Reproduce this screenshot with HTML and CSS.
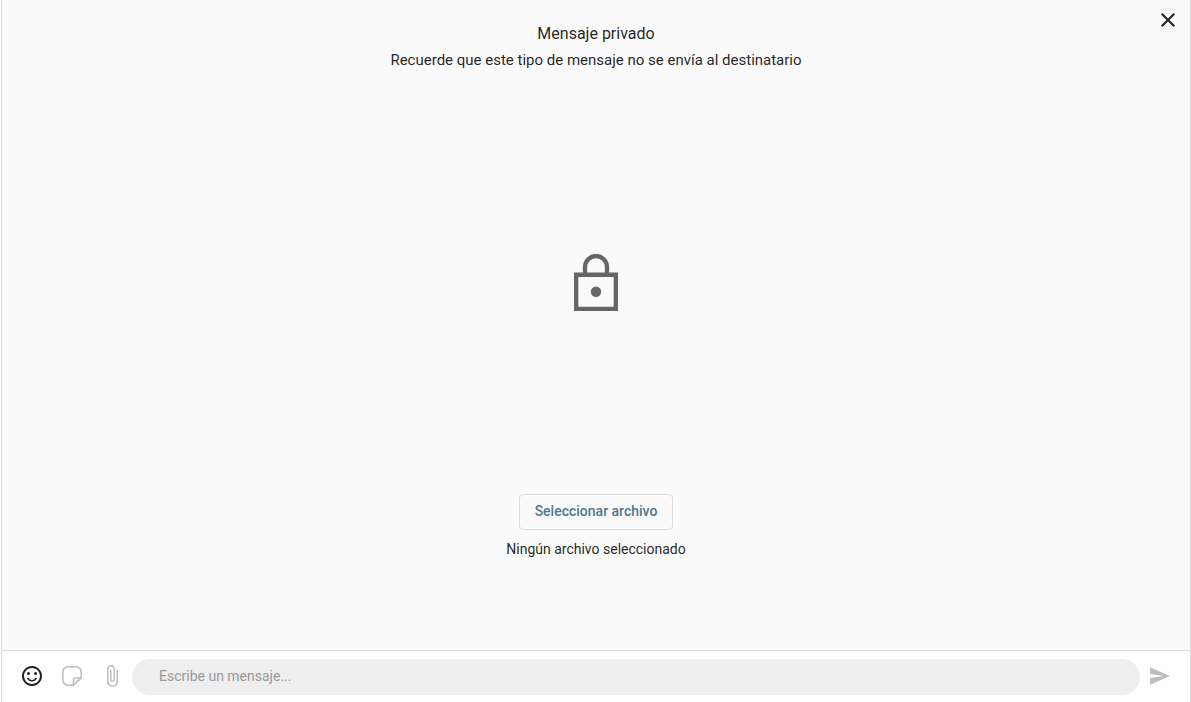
FILE: index.html
```html
<!DOCTYPE html>
<html lang="es">
<head>
  <meta charset="UTF-8" />
  <meta name="viewport" content="width=device-width, initial-scale=1" />
  <title>Mensaje privado</title>
  <link rel="stylesheet" href="styles.css">
</head>
<body>
  <div class="panel">
    <main class="note">
      <button class="icon-button close" type="button" aria-label="Cerrar">
        <svg width="24" height="24" viewBox="0 0 24 24">
          <path d="M19 6.41 17.59 5 12 10.59 6.41 5 5 6.41 10.59 12 5 17.59 6.41 19 12 13.41 17.59 19 19 17.59 13.41 12z"/>
        </svg>
      </button>

      <header class="intro">
        <h1>Mensaje privado</h1>
        <p>Recuerde que este tipo de mensaje no se envía al destinatario</p>
      </header>

      <svg class="lock" width="44" height="58" viewBox="0 0 44 58" aria-hidden="true">
        <path d="M11 20V13a11 11 0 0 1 22 0v7" fill="none" stroke="currentColor" stroke-width="4.300"/>
        <path d="M0 18.600h44V57H0zM4.300 23v29.700h35.400V23z" fill-rule="evenodd"/>
        <circle cx="22" cy="37.700" r="5.200"/>
      </svg>

      <div class="picker">
        <button class="picker-button" type="button">Seleccionar archivo</button>
        <p>Ningún archivo seleccionado</p>
      </div>
    </main>

    <form class="composer">
      <button class="icon-button emoji" type="button" aria-label="Emojis">
        <svg width="24" height="24" viewBox="0 0 24 24">
          <path d="M11.99 2C6.47 2 2 6.48 2 12s4.47 10 9.99 10C17.52 22 22 17.52 22 12S17.52 2 11.99 2zM12 20c-4.42 0-8-3.58-8-8s3.58-8 8-8 8 3.58 8 8-3.58 8-8 8z"/>
          <circle cx="8.5" cy="9.5" r="1.5"/>
          <circle cx="15.5" cy="9.5" r="1.5"/>
          <path d="M12 16c-1.480 0-2.750-.81-3.450-2H6.880c.8 2.050 2.790 3.500 5.120 3.500s4.320-1.450 5.120-3.500h-1.670c-.7 1.190-1.970 2-3.450 2z"/>
        </svg>
      </button>
      <button class="icon-button" type="button" aria-label="Stickers">
        <svg class="outline" width="24" height="24" viewBox="0 0 24 24">
          <path d="M13.5 21.2H8a5.200 5.200 0 0 1-5.200-5.200V8A5.200 5.200 0 0 1 8 2.800h8A5.200 5.200 0 0 1 21.200 8v6zM13.500 21.200V16a2 2 0 0 1 2-2h5.700"/>
        </svg>
      </button>
      <button class="icon-button" type="button" aria-label="Adjuntar archivo">
        <svg width="24" height="24" viewBox="0 0 24 24">
          <path d="M16.5 6v11.500c0 2.210-1.790 4-4 4s-4-1.790-4-4V5c0-1.380 1.120-2.500 2.500-2.500s2.500 1.120 2.500 2.500v10.500c0 .55-.45 1-1 1s-1-.45-1-1V6H10v9.500c0 1.380 1.120 2.500 2.500 2.500s2.500-1.120 2.500-2.500V5c0-2.210-1.790-4-4-4S7 2.790 7 5v12.500c0 3.040 2.460 5.500 5.500 5.500s5.500-2.460 5.500-5.500V6z"/>
        </svg>
      </button>
      <input class="message" type="text" placeholder="Escribe un mensaje..." aria-label="Escribe un mensaje">
      <button class="icon-button" type="submit" aria-label="Enviar">
        <svg width="24" height="24" viewBox="0 0 24 24">
          <path d="M2 20.700 22 12 2 3.300V10l14 2-14 2z"/>
        </svg>
      </button>
    </form>
  </div>
</body>
</html>
```
FILE: styles.css
```css
* {
  box-sizing: border-box;
}

body {
  margin: 0;
  padding-left: 1px;
  background: #fff;
  color: rgba(0, 0, 0, 0.87);
  font-family: Roboto, "Liberation Sans", sans-serif;
}

h1,
p {
  margin: 0;
  font-weight: 400;
}

button,
input {
  font-family: inherit;
}

svg {
  display: block;
  fill: currentColor;
}

.panel {
  display: flex;
  flex-direction: column;
  height: 100vh;
  border: solid #e0e0e0;
  border-width: 0 1px;
}

.note {
  position: relative;
  display: flex;
  flex: 1;
  flex-direction: column;
  align-items: center;
  justify-content: space-between;
  padding: 22px 16px 91px;
  background: #fafafa;
  text-align: center;
}

.intro h1 {
  font-size: 16px;
  line-height: 24px;
}

.intro p {
  margin-top: 2px;
  font-size: 15px;
  line-height: 24px;
}

.lock {
  color: #666;
}

.picker-button {
  height: 36px;
  padding: 0 15px 2px;
  background: transparent;
  border: 1px solid #dcdcdc;
  border-radius: 4px;
  color: #517691;
  font-size: 14px;
  font-weight: 500;
  cursor: pointer;
}

.picker p {
  margin-top: 9px;
  font-size: 14px;
  line-height: 20px;
}

.icon-button {
  display: flex;
  align-items: center;
  justify-content: center;
  width: 40px;
  height: 40px;
  padding: 0;
  background: none;
  border: 0;
  color: #bdbdbd;
  cursor: pointer;
}

.close {
  position: absolute;
  top: 0;
  right: 2px;
  color: #212121;
}

.composer {
  display: flex;
  align-items: center;
  height: 52px;
  padding: 0 10px;
  border-top: 1px solid #e0e0e0;
}

.composer .icon-button {
  padding-bottom: 2px;
}

.emoji {
  color: #212121;
}

.outline {
  fill: none;
  stroke: currentColor;
  stroke-width: 1.6;
  stroke-linejoin: round;
}

.message {
  flex: 1;
  min-width: 0;
  height: 36px;
  padding: 0 27px 2px;
  background: #eee;
  border: 0;
  border-radius: 18px;
  outline: none;
  color: #212121;
  font-size: 14px;
}

.message::placeholder {
  color: #999;
}
```
